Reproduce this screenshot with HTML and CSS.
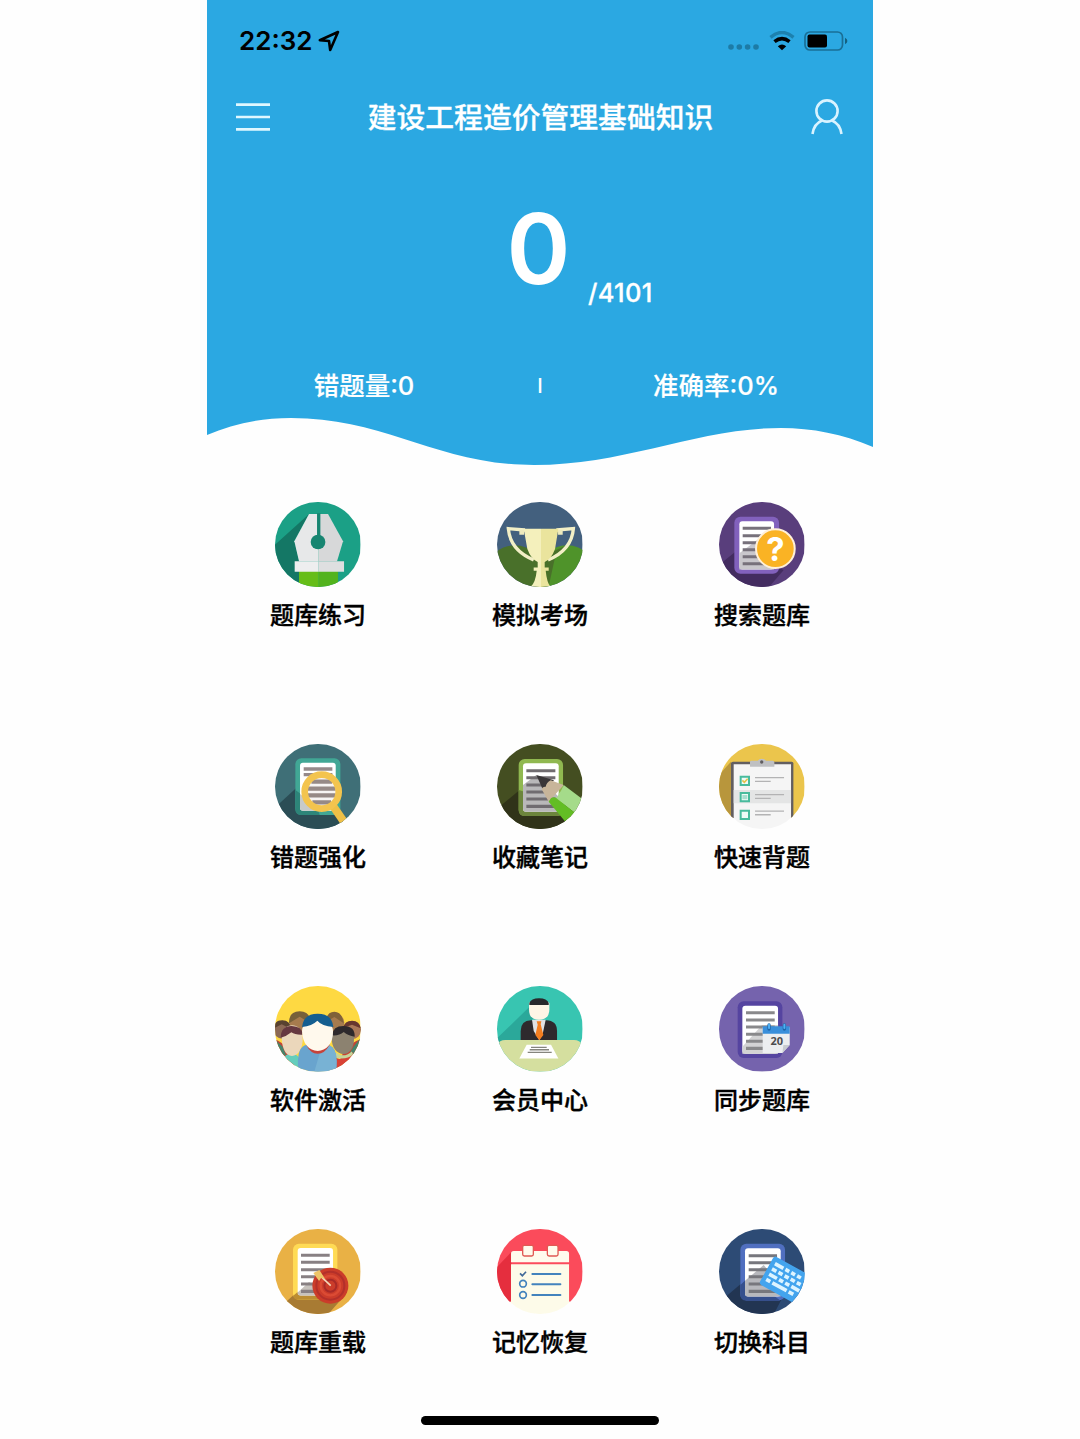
FILE: index.html
```html
<!DOCTYPE html>
<html lang="zh-CN">
<head>
    <meta charset="UTF-8">
    <meta name="viewport" content="width=device-width, initial-scale=1.0">
    <title>建设工程造价管理基础知识</title>
    <link rel="stylesheet" href="styles.css">
</head>
<body>
    <div class="phone">
        <header class="header">
            <svg class="wave" viewBox="0 0 666 466" preserveAspectRatio="none">
                <path d="M0 0H666V447C636 434 605 428 574 428C490 428 420 465 327 465C230 465 180 418 84 418C52 418 25 424 0 435Z" fill="#2ba8e2"/>
            </svg>

            <div class="status-bar">
                <div class="status-left">
                    <span class="time">22:32</span>
                    <svg width="22" height="22" viewBox="0 0 22 22"><path d="M1.8 10.2L20 2L12.2 20L11 11Z" fill="none" stroke="#000" stroke-width="2.6" stroke-linejoin="round"/></svg>
                </div>
                <div class="status-right">
                    <svg class="signal" width="32" height="6" viewBox="0 0 32 6" fill="#1d7ba6"><circle cx="3" cy="3" r="2.8"/><circle cx="11.3" cy="3" r="2.8"/><circle cx="19.6" cy="3" r="2.8"/><circle cx="28" cy="3" r="2.8"/></svg>
                    <svg class="wifi" width="26" height="20" viewBox="0 0 26 20">
                        <path d="M1.5 6.4Q13-3.4 24.5 6.4" fill="none" stroke="#1d81ae" stroke-width="3.4"/>
                        <path d="M5.5 10.6Q13 4.6 20.5 10.6" fill="none" stroke="#000" stroke-width="3.6"/>
                        <path d="M8.8 15.2Q13 11.6 17.2 15.2L13 19.2Z" fill="#000"/>
                    </svg>
                    <svg class="battery" width="44" height="20" viewBox="0 0 44 20">
                        <rect x="1" y="1" width="37.5" height="18" rx="5" fill="none" stroke="#1a6f96" stroke-width="1.7"/>
                        <rect x="3.5" y="3.5" width="19.5" height="13" rx="2" fill="#000"/>
                        <path d="M41 6.8Q43.4 8 43.4 10T41 13.2Z" fill="#15607f"/>
                    </svg>
                </div>
            </div>

            <div class="nav">
                <svg width="36" height="30" viewBox="0 0 36 30"><path d="M1 2.7H35M1 15H35M1 27.3H35" stroke="#dff7ff" stroke-width="2.7"/></svg>
                <h1 class="title">建设工程造价管理基础知识</h1>
                <svg width="34" height="36" viewBox="0 0 34 36" fill="none" stroke="#d9f3ff" stroke-width="2.6"><circle cx="17" cy="12" r="10.6"/><path d="M2.500 35C3.500 28 7 23.500 12 21.500M31.500 35C30.500 28 27 23.500 22 21.500"/></svg>
            </div>

            <div class="score">
                <span class="done">0</span>
                <span class="total">/4101</span>
            </div>

            <div class="stats">
                <span class="stat">错题量:0</span>
                <span class="divider">I</span>
                <span class="stat">准确率:0%</span>
            </div>
        </header>

        <main class="menu">
            <a class="item">
                <svg class="icon" viewBox="46 34 256 256">
                    <rect x="46" y="34" width="256" height="256" fill="#1ba086"/>
                    <path d="M148 70L46 162V290H118V212L104 150Z" fill="#147765"/>
                    <path d="M148 70H177V212H118L104 152Z" fill="#e7e8e9"/>
                    <path d="M177 70H205L250 152L232 212H177Z" fill="#d7d8d9"/>
                    <path d="M172 68H182V140H172Z" fill="#178571"/>
                    <circle cx="175" cy="154" r="22" fill="#178571"/>
                    <path d="M118 240H177V292H118Z" fill="#66bd18"/>
                    <path d="M177 240H235V292H177Z" fill="#52b31d"/>
                    <path d="M105 212H177V243H105Z" fill="#eeeeef"/>
                    <path d="M177 212H253V243H177Z" fill="#dedfe0"/>
                </svg>
                <span class="label">题库练习</span>
            </a>
            <a class="item">
                <svg class="icon" viewBox="52 34 256 256">
                    <rect x="52" y="34" width="256" height="256" fill="#43607e"/>
                    <circle cx="105" cy="252" r="88" fill="#49702a"/>
                    <circle cx="262" cy="252" r="88" fill="#4f932a"/>
                    <path d="M180 200L262 164L225 204L206 292H180Z" fill="#49702a"/>
                    <path d="M136 118L86 114Q91 178 162 208M230 118L281 114Q276 178 205 208" fill="none" stroke="#f2efc6" stroke-width="10"/>
                    <path d="M132 114H184V292H148Q167 281 171 240H162V230H174V214Q154 205 143 175Z" fill="#f4f0bc"/>
                    <path d="M184 114H236L226 175Q215 205 195 214V230H207V240H198Q202 281 216 292H184Z" fill="#eae49d"/>
                    <path d="M119 118H133V132H119ZM235 118H249V132H235Z" fill="#eeeabd"/>
                </svg>
                <span class="label">模拟考场</span>
            </a>
            <a class="item">
                <svg class="icon" viewBox="56 36 256 256">
                    <rect x="56" y="36" width="256" height="256" fill="#593e7c"/>
                    <path d="M56 225L105 185L250 240L205 292H56Z" fill="#432c60"/>
                    <rect x="102" y="80" width="134" height="171" rx="18" fill="#8261bd"/>
                    <rect x="117" y="94" width="104" height="144" rx="9" fill="#fff"/>
                    <path d="M117 190L190 136H221V238H117Z" fill="#c9c7cc"/>
                    <path d="M127 115H212M127 137H212M127 158H212M127 179H212M127 200H212M127 221H212" stroke="#77717b" stroke-width="9"/>
                    <circle cx="225" cy="176" r="58" fill="#fab324" stroke="#fff0d8" stroke-width="6"/>
                    <text x="225" y="214" text-anchor="middle" class="question">?</text>
                </svg>
                <span class="label">搜索题库</span>
            </a>

            <a class="item">
                <svg class="icon" viewBox="46 42 256 256">
                    <rect x="46" y="42" width="256" height="256" fill="#3f6f77"/>
                    <path d="M46 232L130 155L225 235L265 298H46Z" fill="#2b4d55"/>
                    <rect x="107" y="85" width="135" height="170" rx="18" fill="#41a795"/>
                    <path d="M107 180L170 225L180 255H125Q107 255 107 237Z" fill="#2d8579"/>
                    <rect x="121" y="98" width="107" height="144" rx="9" fill="#fff"/>
                    <path d="M121 192L150 215L190 242H130Q121 242 121 233Z" fill="#c7caca"/>
                    <path d="M132 117H218M132 134H218" stroke="#958a8a" stroke-width="10"/>
                    <circle cx="186" cy="185" r="48" fill="#f7f4f3"/>
                    <path d="M155 155H217M144 176H228M144 196H228M158 217H214" stroke="#968986" stroke-width="13"/>
                    <path d="M218 225L260 286" stroke="#efc047" stroke-width="24"/>
                    <circle cx="186" cy="185" r="51" fill="none" stroke="#f3c44e" stroke-width="20"/>
                </svg>
                <span class="label">错题强化</span>
            </a>
            <a class="item">
                <svg class="icon" viewBox="712 42 256 256">
                    <rect x="712" y="42" width="256" height="256" fill="#444e21"/>
                    <path d="M712 236L780 180L900 230L930 298H712Z" fill="#303319"/>
                    <rect x="777" y="87" width="133" height="171" rx="18" fill="#90b850"/>
                    <path d="M777 180L910 220V240Q910 258 892 258H795Q777 258 777 240Z" fill="#6c853c"/>
                    <rect x="790" y="100" width="107" height="145" rx="9" fill="#fff"/>
                    <path d="M790 165L830 135L897 200V245H799Q790 245 790 236Z" fill="#b9b8b9"/>
                    <path d="M800 122H887M800 143H887M800 165H887M800 186H887M800 207H887M800 229H887" stroke="#706c70" stroke-width="9"/>
                    <path d="M830 135L883 151L850 180Z" fill="#393638"/>
                    <path d="M873 151L912 165L867 215L846 178Q848 169 858 170Q860 158 873 151Z" fill="#c8b59a"/>
                    <path d="M912 165L980 216L950 252L888 204Q897 200 897 190Q903 188 912 165Z" fill="#a5db8a"/>
                    <path d="M867 215L874 204Q887 198 893 207L950 252L925 285Z" fill="#63bd24"/>
                </svg>
                <span class="label">收藏笔记</span>
            </a>
            <a class="item">
                <svg class="icon" viewBox="54 42 256 256">
                    <path d="M54 42H310V264H54Z" fill="#ebc54c"/>
                    <path d="M90 95L54 135V264H92Z" fill="#b8963c"/>
                    <path d="M90 100Q90 95 96 95H272Q277 95 277 100V264H90Z" fill="#625e60"/>
                    <path d="M98 103H270V264H310V298H54V264H98Z" fill="#f5f5f5"/>
                    <path d="M98 180H270V220H98Z" fill="#e4e5e5"/>
                    <path d="M147 95Q147 92 151 92H170Q174 86 182 86T195 92H215Q220 92 220 97V110H147Z" fill="#bfc0c2"/>
                    <circle cx="182" cy="96" r="5" fill="#625e60"/>
                    <path d="M119 140H144V165H119ZM119 189H144V214H119ZM119 242H144V267H119Z" fill="#eefbf7" stroke="#48bb9d" stroke-width="6"/>
                    <path d="M124 151L130 157L140 146" fill="none" stroke="#e4c34b" stroke-width="5"/>
                    <path d="M124 195H139V208H124Z" fill="#a7ddcf"/>
                    <path d="M162 143H249M162 154H209M162 194H249M162 205H209M162 243H249M162 254H209" stroke="#b3b3b4" stroke-width="4"/>
                </svg>
                <span class="label">快速背题</span>
            </a>

            <a class="item">
                <svg class="icon" viewBox="47 33 256 256">
                    <rect x="47" y="33" width="256" height="256" fill="#fed942"/>
                    <path d="M47 193Q75 204 95 233L112 289H47ZM303 193Q278 202 255 225L226 289H303Z" fill="#c54435"/>
                    <path d="M47 193L70 215L80 240L47 250ZM303 190L282 215L270 237L303 245Z" fill="#46846b"/>
                    <circle cx="121" cy="144" r="31" fill="#a67b4e"/>
                    <path d="M89 145Q88 109 121 109T153 145L121 125Z" fill="#76603a"/>
                    <circle cx="225" cy="144" r="30" fill="#a67b4e"/>
                    <path d="M200 140Q202 110 225 110T253 145L225 126Z" fill="#806239"/>
                    <circle cx="69" cy="164" r="27" fill="#8c6955"/>
                    <path d="M43 160Q45 136 69 136T95 162L67 148Z" fill="#594230"/>
                    <circle cx="278" cy="165" r="27" fill="#a97858"/>
                    <path d="M252 158Q255 137 278 137T304 160L278 149Z" fill="#67382f"/>
                    <path d="M65 289Q65 235 96 235T127 289Z" fill="#64cdbc"/>
                    <path d="M225 245Q250 265 279 230L292 289H225Z" fill="#d84236"/>
                    <path d="M230 232Q252 251 277 229L282 239Q260 255 230 248Z" fill="#c7d599"/>
                    <path d="M67 190C65 138 131 138 130 190C131 219 117 243 98 243S68 219 67 190Z" fill="#ebd7bb"/>
                    <path d="M64 188Q65 152 97 153T130 179Q107 180 96 172Q82 184 64 188Z" fill="#663840"/>
                    <path d="M217 190C217 142 284 142 284 190C284 220 271 237 252 237S217 219 217 190Z" fill="#8c8270"/>
                    <path d="M218 181Q221 152 254 153T286 185Q266 182 253 171Q239 183 218 181Z" fill="#2d292c"/>
                    <path d="M117 289Q109 211 145 209H204Q239 216 230 289Z" fill="#69a4ce"/>
                    <path d="M180 238L204 209Q239 216 230 289H165Z" fill="#78b2d4"/>
                    <path d="M140 209Q154 236 175 236T211 209L205 205H144Z" fill="#c7433b"/>
                    <path d="M128 169C127 126 222 126 221 169C222 206 200 228 175 228S129 206 128 169Z" fill="#fff9ed"/>
                    <path d="M128 156Q132 116 175 116T222 156Q187 153 174 137Q158 153 128 156Z" fill="#155e8f"/>
                </svg>
                <span class="label">软件激活</span>
            </a>
            <a class="item">
                <svg class="icon" viewBox="712 33 256 256">
                    <rect x="712" y="33" width="256" height="256" fill="#38c5b1"/>
                    <path d="M812 93L712 190V210H785V173L820 138Z" fill="#2ba89a"/>
                    <path d="M783 197V168Q783 137 814 136H859Q892 137 892 168V197Z" fill="#2e2a2d"/>
                    <path d="M817 134H858L850 172L839 196L822 168Z" fill="#e0e2e4"/>
                    <path d="M831 139H845L843 148L851 180L839 196L827 180L834 149Z" fill="#f47e20"/>
                    <path d="M808 84Q810 78 838 78T869 84V104Q868 134 838 134T808 104Z" fill="#fff5e6"/>
                    <path d="M809 90V84Q814 70 838 70T867 84V90Z" fill="#28282b"/>
                    <path d="M712 210Q719 195 737 195H943Q960 195 968 210V289H712Z" fill="#d5df9f"/>
                    <path d="M801 209H874L896 250H779Z" fill="#fff"/>
                    <path d="M814 217H861M810 224H868M804 232H876" stroke="#85857e" stroke-width="4"/>
                </svg>
                <span class="label">会员中心</span>
            </a>
            <a class="item">
                <svg class="icon" viewBox="56 34 256 256">
                    <rect x="56" y="34" width="256" height="256" fill="#7563ad"/>
                    <rect x="112" y="80" width="134" height="170" rx="18" fill="#5544a0"/>
                    <rect x="126" y="93" width="107" height="144" rx="9" fill="#fff"/>
                    <path d="M126 216L185 151H233V237H126Z" fill="#d3d3d4"/>
                    <path d="M137 114H223M137 136H223M137 157H223M137 179H223M137 200H223M137 221H223" stroke="#89898b" stroke-width="9"/>
                    <path d="M187 158H268V211L246 235H187Z" fill="#eceef0"/>
                    <path d="M246 235L249 211H268Z" fill="#c7cbd0"/>
                    <path d="M187 155H268V177H187Z" fill="#398fdb"/>
                    <path d="M206 151V163M252 151V163" stroke="#1f66a8" stroke-width="10" stroke-linecap="round"/>
                    <path d="M206 150V160M252 150V160" stroke="#4fb0f4" stroke-width="6" stroke-linecap="round"/>
                    <text x="229" y="211" text-anchor="middle" class="day">20</text>
                </svg>
                <span class="label">同步题库</span>
            </a>

            <a class="item">
                <svg class="icon" viewBox="46 42 256 256">
                    <rect x="46" y="42" width="256" height="256" fill="#e9b145"/>
                    <path d="M76 263L145 201L256 240L205 298H76Z" fill="#a87b33"/>
                    <rect x="100" y="86" width="133" height="168" rx="18" fill="#ffdb55"/>
                    <path d="M100 243L118 227L210 254H116Q103 254 100 243Z" fill="#bc8d32"/>
                    <rect x="114" y="99" width="106" height="142" rx="9" fill="#fff"/>
                    <path d="M114 232L148 201L215 241H123Q114 241 114 232Z" fill="#c7c2bd"/>
                    <path d="M124 121H210M124 142H210M124 164H210M124 185H210M124 207H210M124 229H210" stroke="#888083" stroke-width="9"/>
                    <circle cx="212" cy="212" r="54" fill="#cb3c2a"/>
                    <circle cx="212" cy="212" r="42" fill="none" stroke="#b3302a" stroke-width="6"/>
                    <circle cx="212" cy="212" r="29" fill="none" stroke="#db4b34" stroke-width="7"/>
                    <circle cx="212" cy="212" r="18" fill="none" stroke="#a82a28" stroke-width="6"/>
                    <path d="M178 179L213 212" stroke="#f4d9b9" stroke-width="5"/>
                    <path d="M161 174L179 165L196 191L184 189L178 198Z" fill="#edc568"/>
                </svg>
                <span class="label">题库重载</span>
            </a>
            <a class="item">
                <svg class="icon" viewBox="712 42 256 256">
                    <path d="M712 42H968V260H712Z" fill="#fb4b5b"/>
                    <path d="M754 112L712 156V260H758Z" fill="#e52e3e"/>
                    <path d="M754 142V116Q754 108 762 108H920Q928 108 928 116V142Z" fill="#fffbed"/>
                    <path d="M754 148H928V260H968V298H712V260H754Z" fill="#fdfbe9"/>
                    <rect x="789" y="91" width="32" height="32" rx="5" fill="#fffbed" stroke="#e05a54" stroke-width="4"/>
                    <rect x="863" y="91" width="32" height="32" rx="5" fill="#fffbed" stroke="#e05a54" stroke-width="4"/>
                    <path d="M781 175L788 182L799 170" fill="none" stroke="#416a99" stroke-width="5"/>
                    <circle cx="790" cy="206" r="10" fill="none" stroke="#4383bd" stroke-width="5"/>
                    <circle cx="790" cy="240" r="10" fill="none" stroke="#4383bd" stroke-width="5"/>
                    <path d="M818 177H902M818 208H902M818 240H902" stroke="#4383bd" stroke-width="6" stroke-linecap="round"/>
                </svg>
                <span class="label">记忆恢复</span>
            </a>
            <a class="item">
                <svg class="icon" viewBox="56 42 256 256">
                    <rect x="56" y="42" width="256" height="256" fill="#2d4b75"/>
                    <path d="M76 245L145 187L250 240L220 298H76Z" fill="#223552"/>
                    <rect x="120" y="86" width="134" height="170" rx="18" fill="#506fc0"/>
                    <path d="M120 210L145 187L240 256H137Q120 256 120 238Z" fill="#354f8d"/>
                    <rect x="134" y="100" width="107" height="144" rx="9" fill="#fff"/>
                    <path d="M134 197L190 150L241 210V244H143Q134 244 134 235Z" fill="#b7b8bd"/>
                    <path d="M145 122H230M145 143H230M145 164H230M145 185H230M145 207H230M145 229H230" stroke="#77777d" stroke-width="9"/>
                    <g transform="translate(222 122) rotate(29)">
                        <rect width="145" height="96" rx="9" fill="#43a4ee"/>
                        <path d="M13 20H42M49 20H62M69 20H82M89 20H102M13 38H28M35 38H49M56 38H70M77 38H91M98 38H111M13 56H40M47 56H61M68 56H82M89 56H116M13 74H27M34 74H83M90 74H106" stroke="#ddf4ff" stroke-width="11"/>
                    </g>
                </svg>
                <span class="label">切换科目</span>
            </a>
        </main>

        <div class="home-indicator"></div>
    </div>
</body>
</html>
```

FILE: styles.css
```css
* {
    box-sizing: border-box;
}
body {
    margin: 0;
    background: #fefefe;
    font-family: Inter, "Noto Sans CJK SC", sans-serif;
    color: #000;
}
.phone {
    width: 666px;
    height: 1439px;
    margin: 0 auto;
    display: flex;
    flex-direction: column;
    align-items: center;
}

/* Header */
.header {
    position: relative;
    width: 100%;
    height: 466px;
    flex-shrink: 0;
    color: #fff;
}
.wave {
    position: absolute;
    top: 0;
    left: 0;
    width: 100%;
    height: 100%;
    z-index: -1;
}
.status-bar {
    display: flex;
    justify-content: space-between;
    height: 82px;
    padding: 0 25px 0 32px;
    align-items: center;
}
.status-left, .status-right {
    display: flex;
    align-items: center;
}
.time {
    color: #000;
    font-size: 26px;
    font-weight: 600;
    margin-right: 5px;
    padding-bottom: 2px;
    width: 74px;
    white-space: nowrap;
}
.signal {
    margin: 12px 9px 0 0;
}
.wifi {
    margin-right: 9px;
}
.nav {
    display: flex;
    justify-content: space-between;
    align-items: center;
    height: 70px;
    padding: 0 29px 0 28px;
}
.title {
    margin: 0;
    padding-bottom: 4px;
    font-size: 28.8px;
    font-weight: 500;
    -webkit-text-stroke: 0.3px #fff;
}
.score {
    height: 198px;
    display: grid;
    grid-template-columns: 1fr 62px 1fr;
    align-items: start;
    padding-top: 48px;
}
.done {
    grid-column: 2;
    font-size: 97px;
    font-weight: 600;
    line-height: 98px;
    text-align: center;
    margin-left: -3px;
}
.total {
    padding: 76px 0 0 17px;
    font-size: 25.5px;
    font-weight: 500;
    line-height: 34px;
    letter-spacing: 0.3px;
    -webkit-text-stroke: 0.3px #fff;
}
.stats {
    display: grid;
    grid-template-columns: 314px 38px 314px;
    height: 66px;
    align-items: center;
    text-align: center;
}
.stat {
    font-size: 25.5px;
    font-weight: 500;
    -webkit-text-stroke: 0.2px #fff;
}
.divider {
    font-size: 20px;
    font-weight: 500;
    padding-top: 6px;
}

/* Menu */
.menu {
    width: 100%;
    padding-top: 35.5px;
    display: grid;
    grid-template-columns: repeat(3, 1fr);
    grid-template-rows: repeat(4, 128px);
    row-gap: 114.4px;
}
.item {
    display: flex;
    flex-direction: column;
    align-items: center;
}
.icon {
    width: 85.4px;
    height: 85.4px;
    border-radius: 50%;
    overflow: hidden;
}
.label {
    margin-top: 17px;
    font-size: 24px;
    line-height: 24px;
    font-weight: 500;
    -webkit-text-stroke: 0.4px #000;
}
.question {
    font: 700 98px Inter, sans-serif;
    fill: #fff;
}
.day {
    font: 700 33px "Open Sans", sans-serif;
    fill: #4c4c4e;
}

.home-indicator {
    width: 238px;
    height: 9px;
    margin-top: auto;
    margin-bottom: 14px;
    border-radius: 5px;
    background: #000;
    flex-shrink: 0;
}
```
